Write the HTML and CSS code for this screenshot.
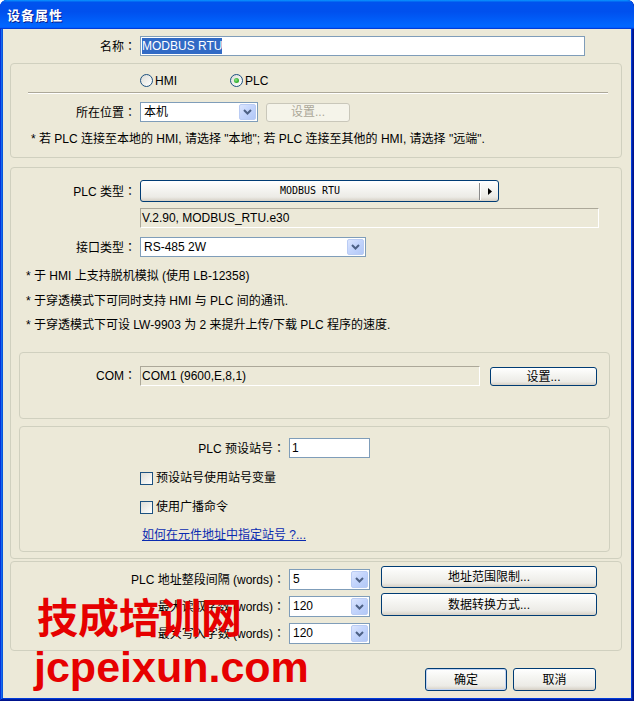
FILE: index.html
```html
<!DOCTYPE html>
<html lang="zh-CN">
<head>
<meta charset="utf-8">
<title>设备属性</title>
<link rel="stylesheet" href="styles.css">
</head>
<body>
<div class="window">
  <div class="titlebar"><span class="title">设备属性</span></div>
  <div class="client">
    <div class="row row-name">
      <span class="lbl lbl-name">名称<span class="colon" lang="zh-TW">：</span></span>
      <div class="textbox tb-name"><span class="sel">MODBUS RTU</span></div>
    </div>

    <div class="group g1">
      <div class="radio-row">
        <span class="radio-item r-hmi"><span class="radio"></span>HMI</span>
        <span class="radio-item"><span class="radio checked"></span>PLC</span>
      </div>
      <div class="sep"></div>
      <div class="row row-loc">
        <span class="lbl lbl-g">所在位置<span class="colon" lang="zh-TW">：</span></span>
        <div class="combo w-loc"><span class="cval">本机</span><span class="ddbtn"><svg width="9" height="6" viewBox="0 0 9 6"><path d="M1 1 L4.5 4.5 L8 1" fill="none" stroke="#4D6185" stroke-width="2"/></svg></span></div>
        <button class="btn disabled b-set1">设置...</button>
      </div>
      <div class="note n1">* 若 PLC 连接至本地的 HMI, 请选择 "本地"; 若 PLC 连接至其他的 HMI, 请选择 "远端".</div>
    </div>

    <div class="group g2">
      <div class="row row-type">
        <span class="lbl lbl-g">PLC 类型<span class="colon" lang="zh-TW">：</span></span>
        <button class="btn plcbtn"><span class="plcname">MODBUS RTU</span><span class="plcdiv"></span><span class="plcarrow"><svg width="4" height="7" viewBox="0 0 4 7"><polygon points="0,0 4,3.5 0,7" fill="#000"/></svg></span></button>
      </div>
      <div class="infobox">V.2.90, MODBUS_RTU.e30</div>
      <div class="row row-if">
        <span class="lbl lbl-g">接口类型<span class="colon" lang="zh-TW">：</span></span>
        <div class="combo w-if"><span class="cval">RS-485 2W</span><span class="ddbtn"><svg width="9" height="6" viewBox="0 0 9 6"><path d="M1 1 L4.5 4.5 L8 1" fill="none" stroke="#4D6185" stroke-width="2"/></svg></span></div>
      </div>
      <div class="note n2a">* 于 HMI 上支持脱机模拟 (使用 LB-12358)</div>
      <div class="note n2b">* 于穿透模式下可同时支持 HMI 与 PLC 间的通讯.</div>
      <div class="note n2c">* 于穿透模式下可设 LW-9903 为 2 来提升上传/下载 PLC 程序的速度.</div>

      <div class="group inner g-com">
        <div class="row row-com">
          <span class="lbl lbl-com">COM<span class="colon" lang="zh-TW">：</span></span>
          <div class="infobox com-field">COM1 (9600,E,8,1)</div>
          <button class="btn b-set2">设置...</button>
        </div>
      </div>

      <div class="group inner g-sta">
        <div class="row row-sta">
          <span class="lbl lbl-sta">PLC 预设站号<span class="colon" lang="zh-TW">：</span></span>
          <div class="textbox tb-sta">1</div>
        </div>
        <div class="cbrow cb1"><span class="checkbox"></span>预设站号使用站号变量</div>
        <div class="cbrow cb2"><span class="checkbox"></span>使用广播命令</div>
        <div class="link">如何在元件地址中指定站号 ?...</div>
      </div>
    </div>

    <div class="group g3">
      <div class="g3-left">
        <div class="row g3-row">
          <span class="lbl lbl-g3">PLC 地址整段间隔 (words)<span class="colon" lang="zh-TW">：</span></span>
          <div class="combo w-g3"><span class="cval">5</span><span class="ddbtn"><svg width="9" height="6" viewBox="0 0 9 6"><path d="M1 1 L4.5 4.5 L8 1" fill="none" stroke="#4D6185" stroke-width="2"/></svg></span></div>
        </div>
        <div class="row g3-row">
          <span class="lbl lbl-g3">最大读取字数 (words)<span class="colon" lang="zh-TW">：</span></span>
          <div class="combo w-g3"><span class="cval">120</span><span class="ddbtn"><svg width="9" height="6" viewBox="0 0 9 6"><path d="M1 1 L4.5 4.5 L8 1" fill="none" stroke="#4D6185" stroke-width="2"/></svg></span></div>
        </div>
        <div class="row g3-row">
          <span class="lbl lbl-g3">最大写入字数 (words)<span class="colon" lang="zh-TW">：</span></span>
          <div class="combo w-g3"><span class="cval">120</span><span class="ddbtn"><svg width="9" height="6" viewBox="0 0 9 6"><path d="M1 1 L4.5 4.5 L8 1" fill="none" stroke="#4D6185" stroke-width="2"/></svg></span></div>
        </div>
      </div>
      <div class="g3-right">
        <button class="btn b-range">地址范围限制...</button>
        <button class="btn b-conv">数据转换方式...</button>
      </div>
    </div>

    <div class="footer">
      <button class="btn b-ok">确定</button>
      <button class="btn b-cancel">取消</button>
    </div>

    <div class="wm wm1">技成培训网</div>
    <div class="wm wm2">jcpeixun.com</div>
  </div>
</div>
</body>
</html>
```
FILE: styles.css
```css
* { box-sizing: border-box; margin: 0; padding: 0; }
html, body { width: 634px; height: 701px; overflow: hidden; background: #ffffff; }
body { font: 12px/14px "Liberation Sans", "Noto Sans CJK SC", sans-serif; color: #000; }

.window {
  width: 634px; height: 701px;
  display: flex; flex-direction: column;
  background: #ECE9D8;
  padding: 0 3px 3px;
  border-radius: 7px 7px 0 0;
  box-shadow: inset -1px -1px #00138C, inset 1px 1px #0831D9, inset -2px -2px #001EA0, inset 2px 2px #166AEE, inset -3px -3px #003BDA, inset 3px 3px #0855DD;
}
.titlebar {
  height: 29px; flex: none;
  margin: 0 -3px;
  display: flex; align-items: center;
  padding-left: 7px;
  border-radius: 7px 7px 0 0;
  background: linear-gradient(180deg, #0997FF 0%, #0053EE 8%, #0050EE 40%, #0066FF 88%, #0066FF 93%, #005BFF 95%, #003DD7 96%, #003DD7 100%);
}
.title {
  color: #fff;
  font: bold 13px/16px "Noto Sans CJK SC", sans-serif;
  letter-spacing: 1px;
  text-shadow: 1px 1px 0 #0A1E8C;
}
.client { position: relative; flex: 1; background: #ECE9D8; }

.row { display: flex; align-items: center; }
.lbl { flex: none; text-align: right; white-space: nowrap; padding-right: 4px; }
.colon { font-family: "Noto Sans CJK TC", sans-serif; }

/* text boxes */
.textbox { flex: none; height: 20px; border: 1px solid #7F9DB9; background: #fff; padding: 0 2px; line-height: 18px; }
.row-name { margin-top: 7px; height: 20px; }
.lbl-name { width: 137px; }
.tb-name { width: 445px; padding: 0 1px; }
.sel { display: inline-block; margin-top: 1px; line-height: 16px; background: #316AC5; color: #fff; }

/* groups */
.group { border: 1px solid #D0D0BF; border-radius: 4px; }
.g1 { margin: 7px 0 0 7px; width: 612px; height: 95px; }
.g2 { margin: 9px 0 0 7px; width: 612px; height: 392px; }
.g3 { margin: 2px 0 0 7px; width: 612px; height: 90px; display: flex; }
.inner { margin-left: 8px; width: 591px; }

/* radios */
.radio-row { display: flex; height: 13px; margin-top: 10px; padding-left: 129px; }
.radio-item { display: flex; align-items: center; gap: 2px; height: 13px; }
.r-hmi { width: 90px; }
.radio {
  width: 13px; height: 13px; border-radius: 50%;
  border: 1px solid #1C5180;
  background: linear-gradient(135deg, #DCDCD7 0%, #F2F2EE 60%, #FFFFFF 100%);
  display: flex; align-items: center; justify-content: center;
}
.radio.checked::after {
  content: ""; width: 5px; height: 5px; border-radius: 50%;
  background: radial-gradient(circle at 40% 40%, #8EE58B 0%, #3DB83A 50%, #1E921B 100%);
}
.sep { margin: 5px 0 0 17px; width: 580px; height: 2px; border-top: 1px solid #ACA899; border-bottom: 1px solid #fff; }

.lbl-g { width: 129px; }
.row-loc { margin-top: 8px; height: 20px; }

/* combos */
.combo { flex: none; display: flex; height: 20px; border: 1px solid #7F9DB9; background: #fff; }
.cval { flex: 1; padding-left: 3px; line-height: 18px; white-space: nowrap; overflow: hidden; }
.ddbtn {
  width: 17px; margin: 1px; flex: none;
  display: flex; align-items: center; justify-content: center;
  border: 1px solid #BACCF4; border-radius: 2px;
  background: linear-gradient(135deg, #DCE6FE 0%, #C4D5FC 45%, #B2C8F7 100%);
}
.w-loc { width: 118px; }
.w-if { width: 226px; }
.w-g3 { width: 81px; height: 21px; }

/* buttons */
.btn {
  font: inherit; color: #000; flex: none; padding: 0;
  display: flex; align-items: center; justify-content: center;
  border: 1px solid #003C74; border-radius: 3px;
  background: linear-gradient(180deg, #FFFFFF 0%, #F6F6F3 35%, #ECEBE6 80%, #D6D0C5 100%);
}
.btn.disabled { border-color: #C9C7BA; background: #F5F4EA; color: #ACA899; }
.b-set1 { width: 84px; height: 19px; margin-left: 8px; }

.note { height: 14px; white-space: nowrap; }
.n1 { margin-top: 10px; padding-left: 20px; }

/* group 2 */
.row-type { margin-top: 12px; height: 22px; }
.plcbtn { width: 359px; height: 22px; justify-content: flex-start; }
.plcname { flex: 1; text-align: center; font: 10px/12px "DejaVu Sans Mono", monospace; }
.plcdiv { width: 2px; height: 17px; border-left: 1px solid #8A8A8A; border-right: 1px solid #fff; }
.plcarrow { width: 17px; display: flex; align-items: center; justify-content: center; }
.infobox {
  height: 20px; line-height: 18px; padding-left: 1px; white-space: nowrap;
  border-top: 1px solid #ACA899; border-left: 1px solid #ACA899;
  border-right: 1px solid #fff; border-bottom: 1px solid #fff;
}
.g2 > .infobox { margin: 6px 0 0 129px; width: 459px; }
.row-if { margin-top: 9px; height: 20px; }
.n2a { margin-top: 12px; padding-left: 15px; }
.n2b { margin-top: 11px; padding-left: 15px; }
.n2c { margin-top: 10px; padding-left: 15px; }

.g-com { margin-top: 20px; height: 67px; }
.row-com { margin-top: 13px; height: 20px; align-items: flex-start; }
.lbl-com { width: 120px; line-height: 18px; }
.com-field { width: 340px; flex: none; }
.b-set2 { width: 107px; height: 19px; margin: 1px 0 0 10px; }

.g-sta { margin-top: 7px; height: 126px; }
.row-sta { margin-top: 11px; height: 20px; }
.lbl-sta { width: 269px; }
.tb-sta { width: 81px; }
.cbrow { display: flex; align-items: center; gap: 3px; height: 16px; padding-left: 120px; white-space: nowrap; }
.cb1 { margin-top: 12px; }
.cb2 { margin-top: 13px; }
.checkbox {
  width: 13px; height: 13px; flex: none;
  border: 1px solid #1C5180;
  background: linear-gradient(135deg, #DCDCD7 0%, #F0F0EC 55%, #FFFFFF 100%);
}
.link { margin-top: 13px; height: 14px; padding-left: 122px; color: #0A2BB0; text-decoration: underline; white-space: nowrap; }

/* group 3 */
.g3-left { display: flex; flex-direction: column; gap: 6px; margin-top: 7px; }
.g3-row { height: 21px; }
.lbl-g3 { width: 278px; }
.g3-right { display: flex; flex-direction: column; gap: 5px; margin: 4px 0 0 11px; }
.b-range { width: 216px; height: 22px; }
.b-conv { width: 216px; height: 23px; }

/* footer */
.footer { display: flex; justify-content: flex-end; gap: 6px; margin-top: 17px; padding-right: 35px; }
.b-ok { width: 82px; height: 23px; box-shadow: inset 0 0 0 1px #C2D3F2; }
.b-cancel { width: 83px; height: 23px; }

/* watermark overlay */
.wm { position: absolute; color: #E60000; white-space: nowrap; }
.wm1 { left: 34px; top: 566px; font: bold 41px/41px "Noto Sans CJK SC", sans-serif; }
.wm2 { left: 31px; top: 617px; font: bold 43px/43px "Liberation Sans", sans-serif; }
```
